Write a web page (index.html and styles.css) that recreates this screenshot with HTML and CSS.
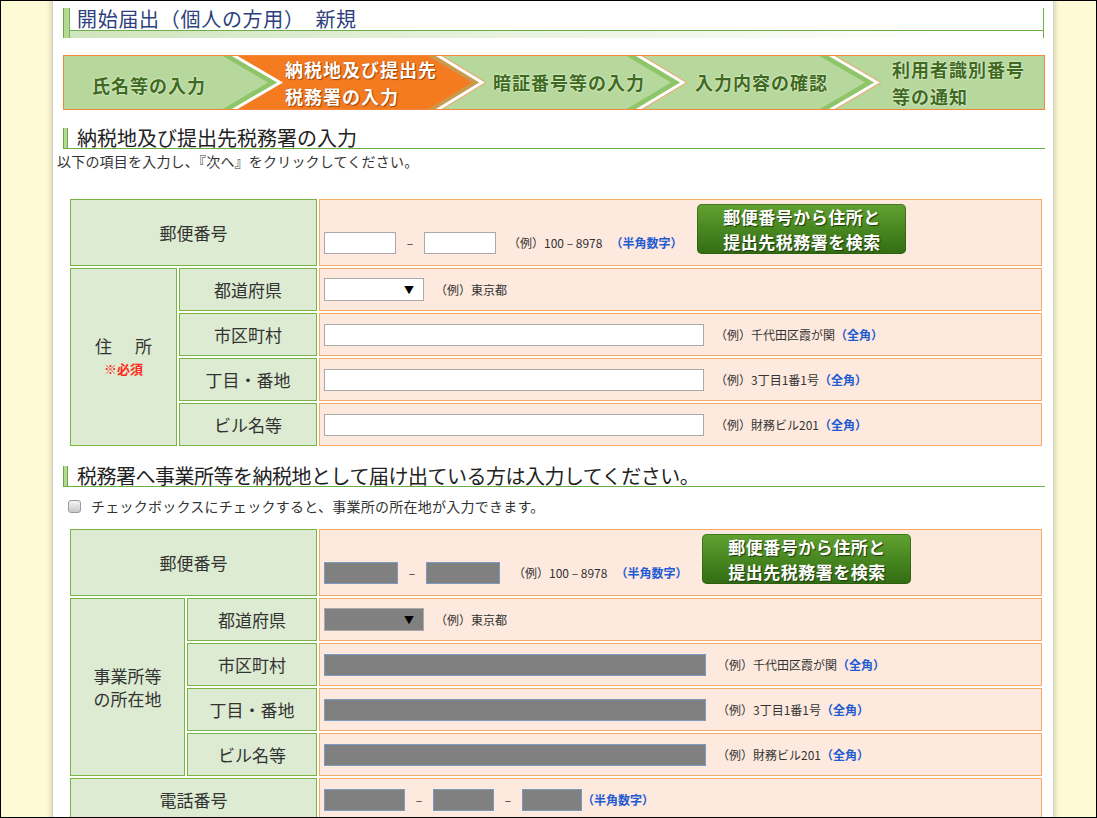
FILE: index.html
```html
<!DOCTYPE html>
<html lang="ja">
<head>
  <meta charset="UTF-8">
  <title>開始届出（個人の方用） 新規</title>
  <link rel="stylesheet" href="styles.css">
</head>
<body>
<div class="page">
  <div class="page-title">
    <h1>開始届出（個人の方用）　新規</h1>
  </div>

  <div class="steps">
    <svg class="steps-art" width="982" height="55" viewBox="0 0 982 55">
      <rect x="0" y="0" width="982" height="55" fill="#b7d89c"/>
      <polygon points="170,0 374,0 419,27.5 374,55 170,55 217,27.5" fill="#f57b21"/>
      <!-- shaded band in front of each arrow -->
      <polygon points="158,0 170,0 217,27.5 170,55 158,55 205,27.5" fill="#8fc569"/>
      <polygon points="364,0 374,0 419,27.5 374,55 364,55 409,27.5" fill="#c99a4e"/>
      <polygon points="562,0 574,0 620,27.5 574,55 562,55 608,27.5" fill="#8fc569"/>
      <polygon points="755,0 767,0 814,27.5 767,55 755,55 802,27.5" fill="#8fc569"/>
      <polyline class="edge" points="170,0 217,27.5 170,55"/>
      <polyline class="edge" points="374,0 419,27.5 374,55"/>
      <polyline class="edge" points="574,0 620,27.5 574,55"/>
      <polyline class="edge" points="767,0 814,27.5 767,55"/>
      <polyline class="edge-thin" points="378,0 423,27.5 378,55"/>
      <polyline class="edge-thin" points="578,0 624,27.5 578,55"/>
      <polyline class="edge-thin" points="771,0 818,27.5 771,55"/>
      <rect x="0.5" y="0.5" width="981" height="54" fill="none" stroke="#f0873a"/>
    </svg>
    <ol class="steps-list">
      <li class="step">氏名等の入力</li>
      <li class="step on">納税地及び提出先<br>税務署の入力</li>
      <li class="step">暗証番号等の入力</li>
      <li class="step">入力内容の確認</li>
      <li class="step">利用者識別番号<br>等の通知</li>
    </ol>
  </div>

  <h2 class="section-heading">納税地及び提出先税務署の入力</h2>
  <p class="lead">以下の項目を入力し、『次へ』をクリックしてください。</p>

  <div class="form-grid">
    <div class="label wide">郵便番号</div>
    <div class="value value-zip">
      <input class="field zip" type="text">
      <span class="dash">–</span>
      <input class="field zip" type="text">
      <span class="example ex-zip">（例）100 – 8978</span>
      <span class="note">（半角数字）</span>
      <button class="search-btn" type="button">郵便番号から住所と<br>提出先税務署を検索</button>
    </div>

    <div class="label group">
      <span class="spaced">住　所</span>
      <span class="required">※必須</span>
    </div>
    <div class="label">都道府県</div>
    <div class="value">
      <span class="select">▼</span>
      <span class="example">（例）東京都</span>
    </div>
    <div class="label">市区町村</div>
    <div class="value">
      <input class="field long" type="text">
      <span class="example">（例）千代田区霞が関</span><span class="note">（全角）</span>
    </div>
    <div class="label">丁目・番地</div>
    <div class="value">
      <input class="field long" type="text">
      <span class="example">（例）3丁目1番1号</span><span class="note">（全角）</span>
    </div>
    <div class="label">ビル名等</div>
    <div class="value">
      <input class="field long" type="text">
      <span class="example">（例）財務ビル201</span><span class="note">（全角）</span>
    </div>
  </div>

  <h2 class="section-heading heading-long">税務署へ事業所等を納税地として届け出ている方は入力してください。</h2>
  <label class="check-line"><input class="check" type="checkbox">チェックボックスにチェックすると、事業所の所在地が入力できます。</label>

  <div class="form-grid office">
    <div class="label wide">郵便番号</div>
    <div class="value value-zip">
      <input class="field zip off" type="text" disabled>
      <span class="dash">–</span>
      <input class="field zip off" type="text" disabled>
      <span class="example ex-zip">（例）100 – 8978</span>
      <span class="note">（半角数字）</span>
      <button class="search-btn" type="button">郵便番号から住所と<br>提出先税務署を検索</button>
    </div>

    <div class="label group">
      <span>事業所等</span>
      <span>の所在地</span>
    </div>
    <div class="label">都道府県</div>
    <div class="value">
      <span class="select off">▼</span>
      <span class="example">（例）東京都</span>
    </div>
    <div class="label">市区町村</div>
    <div class="value">
      <input class="field long off" type="text" disabled>
      <span class="example">（例）千代田区霞が関</span><span class="note">（全角）</span>
    </div>
    <div class="label">丁目・番地</div>
    <div class="value">
      <input class="field long off" type="text" disabled>
      <span class="example">（例）3丁目1番1号</span><span class="note">（全角）</span>
    </div>
    <div class="label">ビル名等</div>
    <div class="value">
      <input class="field long off" type="text" disabled>
      <span class="example">（例）財務ビル201</span><span class="note">（全角）</span>
    </div>

    <div class="label wide">電話番号</div>
    <div class="value">
      <input class="field tel1 off" type="text" disabled>
      <span class="dash">–</span>
      <input class="field tel2 off" type="text" disabled>
      <span class="dash">–</span>
      <input class="field tel3 off" type="text" disabled>
      <span class="note tel-note">（半角数字）</span>
    </div>
  </div>
</div>
</body>
</html>
```

FILE: styles.css
```css
html, body {
  margin: 0;
  padding: 0;
  height: 100%;
}
body {
  box-sizing: border-box;
  border: 1px solid #000;
  background: #fffad6;
  overflow: hidden;
  font-family: "Noto Sans CJK JP", "Noto Sans", sans-serif;
  color: #333;
}
.page {
  width: 1000px;
  min-height: 100%;
  margin-left: 52px;
  padding-top: 7px;
  box-sizing: border-box;
  background: #fff;
  box-shadow: 0 0 0 1px #d4d4c8, 0 0 5px 2px rgba(120, 120, 90, .35);
}

/* page title */
.page-title {
  margin: 0 9px 0 10px;
  border-right: 1px solid #6ab04a;
  background: linear-gradient(to right, #6aa844 0 1px, #b3d993 1px 6px, #79b553 6px 7px, transparent 7px) no-repeat;
}
.page-title h1 {
  margin: 0 0 0 7px;
  padding-left: 7px;
  height: 22px;
  border-bottom: 1px solid #6ab04a;
  font-size: 20px;
  line-height: 22px;
  font-weight: 400;
  letter-spacing: .7px;
  color: #2d3f7e;
}
.page-title::after {
  content: "";
  display: block;
  height: 7px;
  margin-left: 7px;
  background: linear-gradient(to right, #cfe5bd, #e6f1dc 40%, #fff 92%);
}

/* progress steps: artwork and labels share one grid cell */
.steps {
  display: grid;
  width: 982px;
  height: 55px;
  margin: 17px 0 0 10px;
}
.steps > * { grid-area: 1 / 1; }
.steps-art { display: block; }
.steps-art .edge { fill: none; stroke: #fff; stroke-width: 3; }
.steps-art .edge-thin { fill: none; stroke: #f5a36c; stroke-width: 1; }
.steps-list {
  display: flex;
  margin: 0;
  padding: 0;
  list-style: none;
}
.step {
  display: flex;
  align-items: center;
  box-sizing: border-box;
  font-size: 18px;
  font-weight: 700;
  line-height: 26.5px;
  letter-spacing: 1px;
  color: #3e6a20;
  text-shadow: 0 0 2px #f0f8e8, 0 0 1px #f0f8e8;
  white-space: nowrap;
}
.step:nth-child(1) { width: 222px; padding: 5px 0 0 29px; }
.step:nth-child(2) { width: 208px; }
.step:nth-child(3) { width: 202px; }
.step:nth-child(4) { width: 197px; }
.step:nth-child(5) { width: 153px; }
.step.on {
  color: #fff;
  text-shadow: 1px 1px 1px #a34400, 0 0 1px #a34400;
}

/* section headings */
.section-heading {
  margin: 18px 8px 0 10px;
  padding-left: 14px;
  height: 20px;
  border-bottom: 1px solid #6ab04a;
  background: linear-gradient(to right, #6aa844 0 1px, #b3d993 1px 4px, #6aa844 4px 5px, transparent 5px) no-repeat;
  font-size: 20px;
  line-height: 20px;
  font-weight: 400;
  color: #222;
}
.heading-long {
  margin-top: 20px;
  letter-spacing: -.5px;
}
.lead {
  margin: 0;
  padding: 2px 0 0 4px;
  font-size: 14px;
  line-height: 20px;
  letter-spacing: .2px;
}
.check-line {
  display: flex;
  align-items: center;
  margin: 9px 0 0 15px;
  height: 20px;
  font-size: 14px;
  letter-spacing: .25px;
}
.check {
  appearance: none;
  width: 13px;
  height: 13px;
  margin: 0 10px 0 0;
  border: 1px solid #9a9a9a;
  border-radius: 3px;
  background: linear-gradient(#f4f4f4, #c8c8c8);
}

/* form grid */
.form-grid {
  display: grid;
  grid-template-columns: 107px 138px 1fr;
  grid-template-rows: 67px repeat(4, 43px);
  gap: 2px;
  margin: 28px 11px 0 17px;
}
.form-grid.office {
  grid-template-columns: 115px 130px 1fr;
  grid-template-rows: 67px repeat(5, 43px);
  margin-top: 13px;
}
.label {
  display: flex;
  align-items: center;
  justify-content: center;
  background: #dcebd1;
  border: 1px solid #79b443;
  font-size: 17px;
  color: #333;
}
.label.wide { grid-column: span 2; }
.label.group {
  grid-row: span 4;
  flex-direction: column;
  line-height: 23px;
}
.spaced { letter-spacing: 3px; margin-right: -3px; }
.required {
  color: #ff2a1a;
  font-size: 13px;
  font-weight: 700;
}
.value {
  display: flex;
  align-items: center;
  padding-left: 4px;
  background: #fde9dd;
  border: 1px solid #f9aa68;
  font-size: 12px;
}
.value-zip {
  align-items: flex-end;
  padding: 3px 0 11px 4px;
}

/* controls */
.field {
  box-sizing: border-box;
  height: 22px;
  margin: 0;
  padding: 0 3px;
  border: 1px solid #a9a9a9;
  background: #fff;
  font: 13px "Noto Sans CJK JP", sans-serif;
}
.field.off {
  background: #808080;
  border-color: #7d9bbf;
}
.field.zip { width: 72px; }
.office .field.zip { width: 74px; }
.field.long { width: 380px; }
.office .field.long { width: 382px; }
.field.tel1 { width: 81px; }
.field.tel2 { width: 61px; }
.field.tel3 { width: 60px; }
.dash {
  width: 28px;
  text-align: center;
  line-height: 22px;
  color: #333;
}
.select {
  box-sizing: border-box;
  display: flex;
  align-items: center;
  justify-content: flex-end;
  width: 100px;
  height: 23px;
  padding-right: 9px;
  border: 1px solid #aaa;
  background: #fff;
  font-size: 10px;
  color: #000;
}
.select.off { background: #808080; }
.example {
  margin-left: 11px;
  line-height: 22px;
  white-space: nowrap;
}
.ex-zip { margin-left: 12px; }
.office .ex-zip { margin-left: 13px; }
.note {
  color: #1f5bd1;
  font-weight: 700;
  line-height: 22px;
  white-space: nowrap;
}
.ex-zip + .note { margin-left: 8px; }
.tel-note { margin-left: 0; }
.search-btn {
  width: 209px;
  height: 50px;
  margin-left: 15px;
  padding: 0;
  border: none;
  border-radius: 5px;
  background: linear-gradient(#62a232, #4a8a22 45%, #336d14);
  box-shadow: inset 0 0 0 1px rgba(40, 80, 10, .5);
  color: #fff;
  font: 700 17px/25px "Noto Sans CJK JP", sans-serif;
  letter-spacing: .5px;
  text-shadow: 1px 1px 1px #1b3a08;
  cursor: pointer;
}
```
